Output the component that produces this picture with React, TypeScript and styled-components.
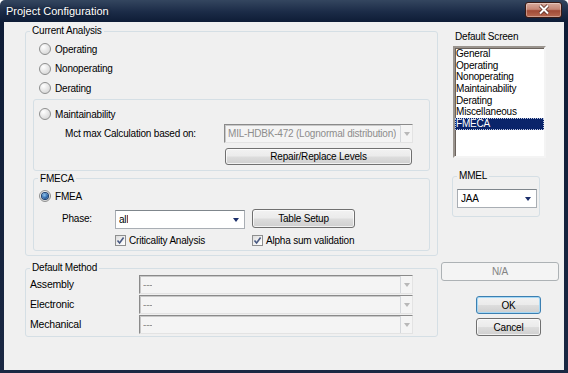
import styled, { createGlobalStyle, css } from "styled-components";

const GlobalStyle = createGlobalStyle`
  html, body {
    margin: 0;
    padding: 0;
    background: #ffffff;
  }
  body {
    font-family: "Liberation Sans", Arial, sans-serif;
    font-size: 10px;
    letter-spacing: -0.2px;
    color: #000;
  }
  * {
    box-sizing: border-box;
  }
`;

const screens = [
  "General",
  "Operating",
  "Nonoperating",
  "Maintainability",
  "Derating",
  "Miscellaneous",
  "FMECA",
];

const methods = ["Assembly", "Electronic", "Mechanical"];

const Radio = ({ checked }: { checked?: boolean }) => <RadioCircle $checked={checked} />;

const Check = () => (
  <CheckSquare>
    <svg width="9" height="9" viewBox="0 0 9 9">
      <path d="M1.5 4.5 L3.6 7 L7.6 1.5" fill="none" stroke="#4a5a82" strokeWidth="1.6" />
    </svg>
  </CheckSquare>
);

const Combo = ({
  w,
  text,
  disabled,
}: {
  w: number;
  text: string;
  disabled?: boolean;
}) => (
  <ComboBox $w={w} $disabled={disabled}>
    <ComboText $disabled={disabled}>{text}</ComboText>
    {disabled ? (
      <DropBox>
        <Arrow $disabled />
      </DropBox>
    ) : (
      <Arrow />
    )}
  </ComboBox>
);

export default function App() {
  return (
    <>
      <GlobalStyle />
      <Window>
        <TitleBar>
          <TitleText>Project Configuration</TitleText>
          <CloseButton aria-label="Close">
            <svg width="14" height="11" viewBox="0 0 14 11">
              <path d="M3 1.5 L11 9.5 M11 1.5 L3 9.5" stroke="#5a2a22" strokeWidth="3.6" />
              <path d="M3 1.5 L11 9.5 M11 1.5 L3 9.5" stroke="#ffffff" strokeWidth="2" />
            </svg>
          </CloseButton>
        </TitleBar>
        <Client>
          <LeftColumn>
            <GroupBox>
              <Legend>Current Analysis</Legend>
              <AnalysisBody>
                <RadioRow $indent={6}>
                  <Radio />
                  Operating
                </RadioRow>
                <RadioRow $indent={6}>
                  <Radio />
                  Nonoperating
                </RadioRow>
                <RadioRow $indent={6}>
                  <Radio />
                  Derating
                </RadioRow>
                <SubBox>
                  <RadioRow $indent={5}>
                    <Radio />
                    Maintainability
                  </RadioRow>
                  <MctRow>
                    <MctLabel>Mct max Calculation based on:</MctLabel>
                    <Combo w={189} text="MIL-HDBK-472 (Lognormal distribution)" disabled />
                  </MctRow>
                  <LevelsRow>
                    <PushButton $w={187} $h={17}>
                      Repair/Replace Levels
                    </PushButton>
                  </LevelsRow>
                </SubBox>
                <FmecaBox>
                  <Legend>FMECA</Legend>
                  <FmecaBody>
                    <RadioRow $indent={5}>
                      <Radio checked />
                      FMEA
                    </RadioRow>
                    <PhaseGrid>
                      <PhaseLabel>Phase:</PhaseLabel>
                      <PhaseCell $offset={1}>
                        <Combo w={130} text="all" />
                      </PhaseCell>
                      <PhaseCell>
                        <PushButton $w={103} $h={19}>
                          Table Setup
                        </PushButton>
                      </PhaseCell>
                    </PhaseGrid>
                    <CheckGrid>
                      <span />
                      <CheckRow>
                        <Check />
                        Criticality Analysis
                      </CheckRow>
                      <CheckRow $shift={1}>
                        <Check />
                        Alpha sum validation
                      </CheckRow>
                    </CheckGrid>
                  </FmecaBody>
                </FmecaBox>
              </AnalysisBody>
            </GroupBox>

            <MethodBox>
              <Legend>Default Method</Legend>
              <MethodGrid>
                {methods.map((m) => (
                  <MethodRow key={m}>
                    <MethodLabel>{m}</MethodLabel>
                    <Combo w={274} text="---" disabled />
                  </MethodRow>
                ))}
              </MethodGrid>
            </MethodBox>
          </LeftColumn>

          <RightColumn>
            <ScreenLabel>Default Screen</ScreenLabel>
            <ListBox>
              {screens.map((s) => (
                <ListItem key={s} $selected={s === "FMECA"}>
                  {s}
                </ListItem>
              ))}
            </ListBox>
            <MmelBox>
              <Legend>MMEL</Legend>
              <MmelBody>
                <Combo w={80} text="JAA" />
              </MmelBody>
            </MmelBox>
            <PushButton $w={118} $h={19} $variant="disabled" $mt={45}>
              N/A
            </PushButton>
            <PushButton $w={65} $h={18} $variant="default" $mt={15} $ml={35}>
              OK
            </PushButton>
            <PushButton $w={65} $h={18} $mt={4} $ml={35}>
              Cancel
            </PushButton>
          </RightColumn>
        </Client>
      </Window>
    </>
  );
}

const Window = styled.div`
  width: 568px;
  height: 373px;
  display: flex;
  flex-direction: column;
  padding: 0 4px 3px 4px;
  border-radius: 5px 5px 0 0;
  background: linear-gradient(#34465f 0px, #1b2b47 12px, #0e1c36 22px, #1a2843 100%);
`;

const TitleBar = styled.div`
  height: 22px;
  display: flex;
  align-items: center;
  justify-content: space-between;
  padding-left: 2px;
`;

const TitleText = styled.span`
  color: #ffffff;
  font-size: 11px;
  letter-spacing: 0;
  line-height: 13px;
  text-shadow: 0 0 3px rgba(0, 0, 0, 0.6);
`;

const CloseButton = styled.div`
  width: 37px;
  height: 16px;
  margin-right: 2px;
  margin-top: -3px;
  display: flex;
  align-items: center;
  justify-content: center;
  border: 1px solid #3a1a14;
  border-radius: 3px;
  background: linear-gradient(#d8aa9c 0%, #c48675 45%, #a04a36 55%, #b86a52 100%);
  box-shadow: inset 0 0 0 1px rgba(255, 255, 255, 0.35);
`;

const Client = styled.div`
  flex: 1;
  display: flex;
  gap: 3px;
  padding: 3px 5px 0 21px;
  background: #f0f0f0;
`;

const LeftColumn = styled.div`
  width: 413px;
  display: flex;
  flex-direction: column;
`;

const GroupBox = styled.fieldset`
  margin: 0;
  padding: 0;
  min-width: 0;
  border: 1px solid #d5dfe5;
  border-radius: 3px;
`;

const Legend = styled.legend`
  margin-left: 4px;
  padding: 0 2px;
  line-height: 12px;
  font-size: 10px;
`;

const AnalysisBody = styled.div`
  padding: 2.6px 7px 4px 7px;
`;

const RadioRow = styled.div<{ $indent: number }>`
  height: 19.4px;
  display: flex;
  align-items: center;
  gap: 4px;
  padding-left: ${(p) => p.$indent}px;
`;

const RadioCircle = styled.span<{ $checked?: boolean }>`
  width: 12px;
  height: 12px;
  flex: none;
  display: inline-flex;
  align-items: center;
  justify-content: center;
  border: 1px solid #8e8f8f;
  border-radius: 50%;
  background: radial-gradient(circle at 35% 30%, #ffffff 0%, #e8e8e8 45%, #cfcfcf 100%);
  ${(p) =>
    p.$checked &&
    css`
      &::after {
        content: "";
        width: 6px;
        height: 6px;
        border-radius: 50%;
        background: radial-gradient(circle at 40% 35%, #8fc4ee 0%, #2a64a8 60%, #173c72 100%);
        box-shadow: 0 0 0 1px #1b3f6e;
      }
    `}
`;

const SubBox = styled.div`
  margin-top: 1.2px;
  height: 72px;
  padding: 4.5px 16px 0 0;
  border: 1px solid #d5dfe5;
  border-radius: 3px;
`;

const MctRow = styled.div`
  margin-top: 0.5px;
  display: flex;
  align-items: center;
  padding-left: 31px;
`;

const MctLabel = styled.span`
  width: 159px;
  flex: none;
`;

const LevelsRow = styled.div`
  margin-top: 5px;
  padding-left: 191px;
`;

const FmecaBox = styled(GroupBox)`
  margin-top: 2px;
`;

const FmecaBody = styled.div`
  padding: 1.5px 0 3px 0;
`;

const PhaseGrid = styled.div`
  margin-top: 3.5px;
  height: 20px;
  display: grid;
  grid-template-columns: 74px 130px 103px;
  column-gap: 7px;
  align-items: start;
`;

const PhaseLabel = styled.span`
  padding-left: 28px;
  line-height: 20px;
`;

const PhaseCell = styled.div<{ $offset?: number }>`
  padding-top: ${(p) => p.$offset ?? 0}px;
`;

const CheckGrid = styled.div`
  margin-top: 4px;
  height: 14px;
  display: grid;
  grid-template-columns: 74px 130px 103px;
  column-gap: 7px;
  align-items: center;
`;

const CheckRow = styled.div<{ $shift?: number }>`
  display: flex;
  align-items: center;
  gap: 3px;
  white-space: nowrap;
  margin-top: ${(p) => p.$shift ?? 0}px;
`;

const CheckSquare = styled.span`
  width: 11px;
  height: 11px;
  flex: none;
  display: inline-flex;
  align-items: center;
  justify-content: center;
  border: 1px solid #8e8f8f;
  background: linear-gradient(135deg, #dcdcdc 0%, #f4f4f4 60%, #ffffff 100%);
`;

const ComboBox = styled.div<{ $w: number; $disabled?: boolean }>`
  width: ${(p) => p.$w}px;
  height: 19px;
  flex: none;
  display: flex;
  align-items: center;
  justify-content: space-between;
  padding: 0 0 0 3px;
  ${(p) =>
    p.$disabled
      ? css`
          background: #f4f4f4;
          border: 1px solid;
          border-color: #8a8a8a #e3e3e3 #e3e3e3 #8a8a8a;
          box-shadow: inset 1px 1px 0 #c8c8c8;
        `
      : css`
          background: #ffffff;
          border: 1px solid #a9aeb4;
          border-top-color: #7f868c;
          padding-right: 5px;
        `}
`;

const ComboText = styled.span<{ $disabled?: boolean }>`
  white-space: nowrap;
  overflow: hidden;
  color: ${(p) => (p.$disabled ? "#8d8d8d" : "#000000")};
`;

const DropBox = styled.span`
  width: 12px;
  height: 100%;
  flex: none;
  display: flex;
  align-items: center;
  justify-content: center;
  border-left: 1px solid #d4d7db;
  background: #f4f4f4;
`;

const Arrow = styled.span<{ $disabled?: boolean }>`
  width: 0;
  height: 0;
  flex: none;
  border-left: 3.5px solid transparent;
  border-right: 3.5px solid transparent;
  border-top: 4px solid ${(p) => (p.$disabled ? "#b8b8b8" : "#1c2f6b")};
  margin-top: 1px;
`;

const PushButton = styled.div<{
  $w: number;
  $h: number;
  $variant?: "default" | "disabled";
  $mt?: number;
  $ml?: number;
}>`
  width: ${(p) => p.$w}px;
  height: ${(p) => p.$h}px;
  margin-top: ${(p) => p.$mt ?? 0}px;
  margin-left: ${(p) => p.$ml ?? 0}px;
  flex: none;
  display: flex;
  align-items: center;
  justify-content: center;
  border-radius: 3px;
  border: 1px solid #707070;
  background: linear-gradient(#f2f2f2 0%, #ebebeb 48%, #dddddd 52%, #cfcfcf 100%);
  box-shadow: inset 0 0 0 1px rgba(255, 255, 255, 0.7);
  ${(p) =>
    p.$variant === "default" &&
    css`
      border-color: #3c7fb1;
      box-shadow: inset 0 0 0 1px #a6d8f5;
    `}
  ${(p) =>
    p.$variant === "disabled" &&
    css`
      border-color: #adb2b5;
      background: #f4f4f4;
      box-shadow: none;
      color: #838383;
    `}
`;

const MethodBox = styled(GroupBox)`
  margin-top: 6px;
`;

const MethodGrid = styled.div`
  padding: 0 0 2px 0;
`;

const MethodRow = styled.div`
  height: 20px;
  display: flex;
  align-items: center;
`;

const MethodLabel = styled.span`
  width: 113px;
  flex: none;
  padding-left: 4px;
  font-size: 10.5px;
`;

const RightColumn = styled.div`
  width: 118px;
  display: flex;
  flex-direction: column;
  align-items: flex-start;
  padding-top: 6px;
`;

const ScreenLabel = styled.span`
  padding-left: 14px;
  line-height: 12px;
`;

const ListBox = styled.div`
  margin: 3px 0 0 12px;
  width: 93px;
  height: 112px;
  background: #ffffff;
  border: 2px solid;
  border-color: #9a948e #f4f4f4 #f4f4f4 #9a948e;
  box-shadow: inset 1px 1px 0 #6a625c;
  padding-top: 0;
`;

const ListItem = styled.div<{ $selected?: boolean }>`
  height: 11.67px;
  line-height: 11.67px;
  padding-left: 1px;
  white-space: nowrap;
  ${(p) =>
    p.$selected &&
    css`
      background: #0a246a;
      color: #ffffff;
      outline: 1px dotted #c0c8e0;
      outline-offset: -1px;
    `}
`;

const MmelBox = styled(GroupBox)`
  margin: 12px 0 0 11px;
  width: 88px;
`;

const MmelBody = styled.div`
  padding: 7px 0 8px 4px;
`;
